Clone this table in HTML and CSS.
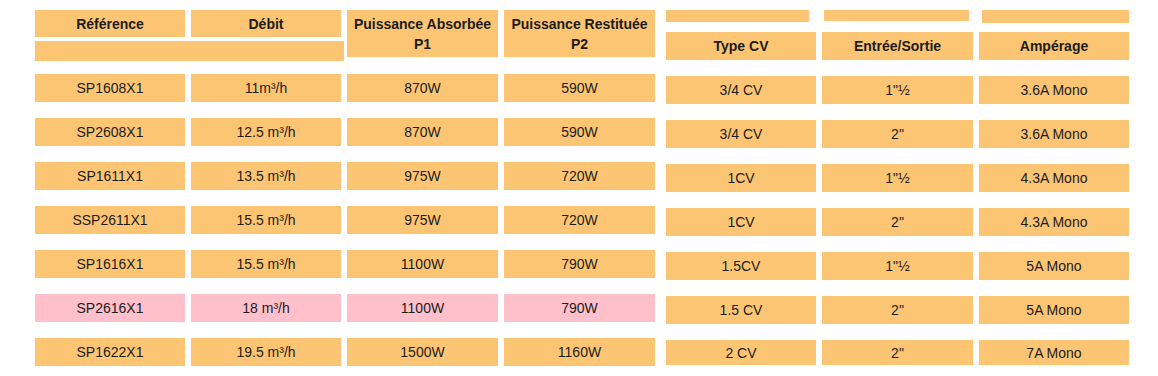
FILE: index.html
```html
<!DOCTYPE html>
<html lang="fr">
<head>
<meta charset="utf-8">
<title>Tableau pompes</title>
<link rel="stylesheet" href="styles.css">
</head>
<body>
<div class="page">
  <div class="tbl tbl-left">
    <div class="head head-left">
      <div class="cell th">Référence</div>
      <div class="cell th">Débit</div>
      <div class="cell th tall">Puissance Absorbée<br>P1</div>
      <div class="cell th tall">Puissance Restituée<br>P2</div>
      <div class="cell span2"></div>
    </div>
    <div class="body">
      <div class="cell">SP1608X1</div><div class="cell">11m³/h</div><div class="cell">870W</div><div class="cell">590W</div>
      <div class="cell">SP2608X1</div><div class="cell">12.5 m³/h</div><div class="cell">870W</div><div class="cell">590W</div>
      <div class="cell">SP1611X1</div><div class="cell">13.5 m³/h</div><div class="cell">975W</div><div class="cell">720W</div>
      <div class="cell">SSP2611X1</div><div class="cell">15.5 m³/h</div><div class="cell">975W</div><div class="cell">720W</div>
      <div class="cell">SP1616X1</div><div class="cell">15.5 m³/h</div><div class="cell">1100W</div><div class="cell">790W</div>
      <div class="cell pink">SP2616X1</div><div class="cell pink">18 m³/h</div><div class="cell pink">1100W</div><div class="cell pink">790W</div>
      <div class="cell">SP1622X1</div><div class="cell">19.5 m³/h</div><div class="cell">1500W</div><div class="cell">1160W</div>
    </div>
  </div>
  <div class="tbl tbl-right">
    <div class="head head-right">
      <div class="cell bar bar-1"></div>
      <div class="cell bar bar-2"></div>
      <div class="cell bar bar-3"></div>
      <div class="cell th">Type CV</div>
      <div class="cell th">Entrée/Sortie</div>
      <div class="cell th">Ampérage</div>
    </div>
    <div class="body">
      <div class="cell">3/4 CV</div><div class="cell">1"½</div><div class="cell">3.6A Mono</div>
      <div class="cell">3/4 CV</div><div class="cell">2"</div><div class="cell">3.6A Mono</div>
      <div class="cell">1CV</div><div class="cell">1"½</div><div class="cell">4.3A Mono</div>
      <div class="cell">1CV</div><div class="cell">2"</div><div class="cell">4.3A Mono</div>
      <div class="cell">1.5CV</div><div class="cell">1"½</div><div class="cell">5A Mono</div>
      <div class="cell">1.5 CV</div><div class="cell">2"</div><div class="cell">5A Mono</div>
      <div class="cell short">2 CV</div><div class="cell short">2"</div><div class="cell short">7A Mono</div>
    </div>
  </div>
</div>
</body>
</html>
```

FILE: styles.css
```css
html, body {
  margin: 0;
  padding: 0;
  background: #ffffff;
}

body {
  font-family: "Liberation Sans", Arial, sans-serif;
  font-size: 14px;
  color: #1c1c1c;
}

.page {
  display: flex;
  align-items: flex-start;
  gap: 11px;
  padding: 10px 0 0 35px;
}

.tbl-left .head,
.tbl-left .body {
  display: grid;
  grid-template-columns: 150px 150px 151px 151px;
  column-gap: 6px;
}

.tbl-right .head,
.tbl-right .body {
  display: grid;
  grid-template-columns: 150px 151px 150px;
  column-gap: 6px;
}

.cell {
  background: #fcc574;
  display: flex;
  align-items: center;
  justify-content: center;
  text-align: center;
  line-height: 20px;
}

.cell.pink {
  background: #ffc0cb;
}

.th {
  font-weight: bold;
}

/* left header */
.head-left {
  grid-template-rows: 27px 20px;
  row-gap: 4px;
}

.head-left .tall {
  grid-row: 1 / span 2;
  margin-bottom: 4px;
}

.head-left .span2 {
  grid-column: 1 / span 2;
  grid-row: 2;
  margin-right: -3px;
}

/* right header */
.head-right {
  grid-template-rows: 13px 28px;
  row-gap: 9px;
}

.bar {
  align-self: start;
  height: 13px;
}

.bar-1 {
  width: 143px;
  height: 12px;
}

.bar-2 {
  margin-left: 2px;
  width: 145px;
  height: 11px;
}

.bar-3 {
  margin-left: 3px;
  width: 147px;
}

/* bodies */
.body {
  grid-auto-rows: 28px;
  row-gap: 16px;
}

.tbl-left .body {
  margin-top: 13px;
}

.tbl-right .body {
  margin-top: 16px;
}

.cell.short {
  align-self: start;
  height: 25px;
}
```
